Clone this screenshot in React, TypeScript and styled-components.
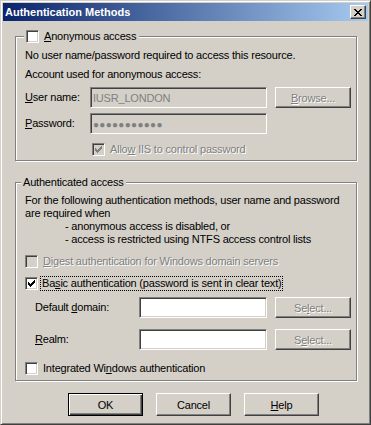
import React from 'react';
import styled, { createGlobalStyle } from 'styled-components';

const GlobalStyle = createGlobalStyle`
  html, body {
    margin: 0;
    padding: 0;
    background: #d4d0c8;
  }
  body {
    font-family: "Liberation Sans", Arial, sans-serif;
    font-size: 11px;
    letter-spacing: -0.2px;
    color: #000;
  }
`;

const Window = styled.div`
  box-sizing: border-box;
  width: 371px;
  height: 425px;
  background: #d4d0c8;
  border: 1px solid;
  border-color: #d4d0c8 #404040 #404040 #d4d0c8;
  box-shadow: inset 1px 1px 0 #fff, inset -1px -1px 0 #808080;
  padding: 2px;
  display: flex;
  flex-direction: column;
`;

const TitleBar = styled.div`
  height: 18px;
  display: flex;
  align-items: center;
  padding: 0 2px 0 2px;
  background: linear-gradient(to right, #0a246a, #a6caf0);
`;

const Title = styled.span`
  color: #fff;
  font-weight: bold;
  font-size: 11px;
  letter-spacing: 0;
  white-space: nowrap;
`;

const CloseButton = styled.div`
  box-sizing: border-box;
  margin-left: auto;
  width: 16px;
  height: 14px;
  background: #d4d0c8;
  border: 1px solid;
  border-color: #fff #404040 #404040 #fff;
  box-shadow: inset -1px -1px 0 #808080;
  display: flex;
  align-items: center;
  justify-content: center;
  padding: 1px 1px 0 0;
`;

const Body = styled.div`
  display: flex;
  flex-direction: column;
  padding: 0 11px 0 12px;
`;

const Group = styled.div<{ $h: number; $mt: number; $pt: number }>`
  position: relative;
  box-sizing: border-box;
  height: ${p => p.$h}px;
  margin-top: ${p => p.$mt}px;
  padding: ${p => p.$pt}px 0 0 9px;
  border: 1px solid #808080;
  box-shadow: inset 1px 1px 0 #fff, 1px 1px 0 #fff;
  display: flex;
  flex-direction: column;
`;

const Legend = styled.div<{ $left: number }>`
  position: absolute;
  top: -7px;
  left: ${p => p.$left}px;
  height: 13px;
  padding: 0 2px;
  background: #d4d0c8;
  display: flex;
  align-items: center;
  line-height: 13px;
  white-space: nowrap;
`;

const Line = styled.div<{ $mt?: number; $indent?: number }>`
  height: 13px;
  line-height: 13px;
  white-space: nowrap;
  margin-top: ${p => p.$mt ?? 0}px;
  padding-left: ${p => p.$indent ?? 0}px;
`;

const Row = styled.div<{ $mt?: number; $indent?: number }>`
  display: flex;
  align-items: center;
  margin-top: ${p => p.$mt ?? 0}px;
  padding-left: ${p => p.$indent ?? 0}px;
`;

const Label = styled.span<{ $w: number }>`
  width: ${p => p.$w}px;
  flex: none;
  line-height: 13px;
  white-space: nowrap;
`;

const Field = styled.div<{ $w: number; $disabled?: boolean }>`
  box-sizing: border-box;
  width: ${p => p.$w}px;
  height: 21px;
  flex: none;
  border: 1px solid;
  border-color: #808080 #fff #fff #808080;
  box-shadow: inset 1px 1px 0 #404040, inset -1px -1px 0 #d4d0c8;
  background: ${p => (p.$disabled ? '#d4d0c8' : '#fff')};
  color: #808080;
  padding: 0 2px;
  display: flex;
  align-items: center;
  white-space: nowrap;
  overflow: hidden;
`;

const Dots = styled.span`
  font-size: 10px;
  letter-spacing: 0.3px;
  padding-top: 1px;
`;

const Button = styled.div<{ $w: number; $disabled?: boolean; $default?: boolean }>`
  box-sizing: border-box;
  width: ${p => p.$w}px;
  height: ${p => (p.$default !== undefined ? 23 : 21)}px;
  flex: none;
  margin-left: 8px;
  background: #d4d0c8;
  border: 1px solid;
  border-color: ${p => (p.$default ? '#000' : '#fff #404040 #404040 #fff')};
  box-shadow: ${p =>
    p.$default
      ? 'inset 1px 1px 0 #fff, inset -1px -1px 0 #404040, inset -2px -2px 0 #808080'
      : 'inset -1px -1px 0 #808080'};
  color: ${p => (p.$disabled ? '#808080' : '#000')};
  text-shadow: ${p => (p.$disabled ? '1px 1px 0 #fff' : 'none')};
  display: flex;
  align-items: center;
  justify-content: center;
  white-space: nowrap;
`;

const ButtonRow = styled.div`
  display: flex;
  gap: 13px;
  margin-top: 12px;
  padding-left: 53px;

  & > div {
    margin-left: 0;
  }
`;

const CheckLabel = styled.label<{ $disabled?: boolean }>`
  display: flex;
  align-items: center;
  height: 13px;
  white-space: nowrap;
  color: ${p => (p.$disabled ? '#808080' : '#000')};
  text-shadow: ${p => (p.$disabled ? '1px 1px 0 #fff' : 'none')};
`;

const CheckText = styled.span<{ $focused?: boolean }>`
  margin-left: ${p => (p.$focused ? 3 : 4)}px;
  padding: 0 1px;
  line-height: 13px;
  outline: ${p => (p.$focused ? '1px dotted #000' : 'none')};
`;

const Box = styled.span<{ $disabled?: boolean }>`
  box-sizing: border-box;
  width: 13px;
  height: 13px;
  flex: none;
  border: 1px solid;
  border-color: #808080 #fff #fff #808080;
  box-shadow: inset 1px 1px 0 #404040, inset -1px -1px 0 #d4d0c8;
  background: ${p => (p.$disabled ? '#d4d0c8' : '#fff')};
  display: block;
  position: relative;

  svg {
    position: absolute;
    left: 2px;
    top: 2px;
  }
`;

const checkRows = [
  '......#',
  '.....##',
  '#...###',
  '##.###.',
  '#####..',
  '.###...',
  '..#....',
];

const closeRows = [
  '##....##',
  '.##..##.',
  '..####..',
  '...##...',
  '..####..',
  '.##..##.',
  '##....##',
];

function PixelGlyph({ rows, color }: { rows: string[]; color: string }) {
  const w = rows[0].length;
  const h = rows.length;
  return (
    <svg width={w} height={h} viewBox={`0 0 ${w} ${h}`} shapeRendering="crispEdges">
      {rows.map((r, y) =>
        r.split('').map((c, x) =>
          c === '#' ? <rect key={`${x}-${y}`} x={x} y={y} width={1} height={1} fill={color} /> : null
        )
      )}
    </svg>
  );
}

function CheckBox({ checked, disabled }: { checked?: boolean; disabled?: boolean }) {
  return (
    <Box $disabled={disabled}>
      {checked && <PixelGlyph rows={checkRows} color={disabled ? '#808080' : '#000'} />}
    </Box>
  );
}

function Check({
  checked,
  disabled,
  focused,
  children,
}: {
  checked?: boolean;
  disabled?: boolean;
  focused?: boolean;
  children: React.ReactNode;
}) {
  return (
    <CheckLabel $disabled={disabled}>
      <CheckBox checked={checked} disabled={disabled} />
      <CheckText $focused={focused}>{children}</CheckText>
    </CheckLabel>
  );
}

export default function App() {
  return (
    <>
      <GlobalStyle />
      <Window>
        <TitleBar>
          <Title>Authentication Methods</Title>
          <CloseButton>
            <PixelGlyph rows={closeRows} color="#000" />
          </CloseButton>
        </TitleBar>
        <Body>
          <Group $h={125} $mt={15} $pt={12}>
            <Legend $left={8}>
              <Check>
                <u>A</u>nonymous access
              </Check>
            </Legend>
            <Line>No user name/password required to access this resource.</Line>
            <Line $mt={6}>Account used for anonymous access:</Line>
            <Row $mt={6}>
              <Label $w={65}>
                <u>U</u>ser name:
              </Label>
              <Field $w={177} $disabled>
                IUSR_LONDON
              </Field>
              <Button $w={76} $disabled>
                <u>B</u>rowse...
              </Button>
            </Row>
            <Row $mt={5}>
              <Label $w={65}>
                <u>P</u>assword:
              </Label>
              <Field $w={177} $disabled>
                <Dots>●●●●●●●●●●●</Dots>
              </Field>
            </Row>
            <Row $mt={9} $indent={67}>
              <Check checked disabled>
                Allo<u>w</u> IIS to control password
              </Check>
            </Row>
          </Group>

          <Group $h={199} $mt={21} $pt={11}>
            <Legend $left={5}>Authenticated access</Legend>
            <Line>For the following authentication methods, user name and password</Line>
            <Line>are required when</Line>
            <Line $indent={40}>- anonymous access is disabled, or</Line>
            <Line $indent={40}>- access is restricted using NTFS access control lists</Line>
            <Row $mt={9}>
              <Check disabled>
                <u>D</u>igest authentication for Windows domain servers
              </Check>
            </Row>
            <Row $mt={9}>
              <Check checked focused>
                Ba<u>s</u>ic authentication (password is sent in clear text)
              </Check>
            </Row>
            <Row $mt={7} $indent={10}>
              <Label $w={104}>
                Default <u>d</u>omain:
              </Label>
              <Field $w={128} />
              <Button $w={76} $disabled>
                Se<u>l</u>ect...
              </Button>
            </Row>
            <Row $mt={11} $indent={10}>
              <Label $w={104}>
                <u>R</u>ealm:
              </Label>
              <Field $w={128} />
              <Button $w={76} $disabled>
                S<u>e</u>lect...
              </Button>
            </Row>
            <Row $mt={12}>
              <Check>
                Integrated Wi<u>n</u>dows authentication
              </Check>
            </Row>
          </Group>

          <ButtonRow>
            <Button $w={75} $default>
              OK
            </Button>
            <Button $w={75} $default={false}>
              Cancel
            </Button>
            <Button $w={75} $default={false}>
              <u>H</u>elp
            </Button>
          </ButtonRow>
        </Body>
      </Window>
    </>
  );
}
